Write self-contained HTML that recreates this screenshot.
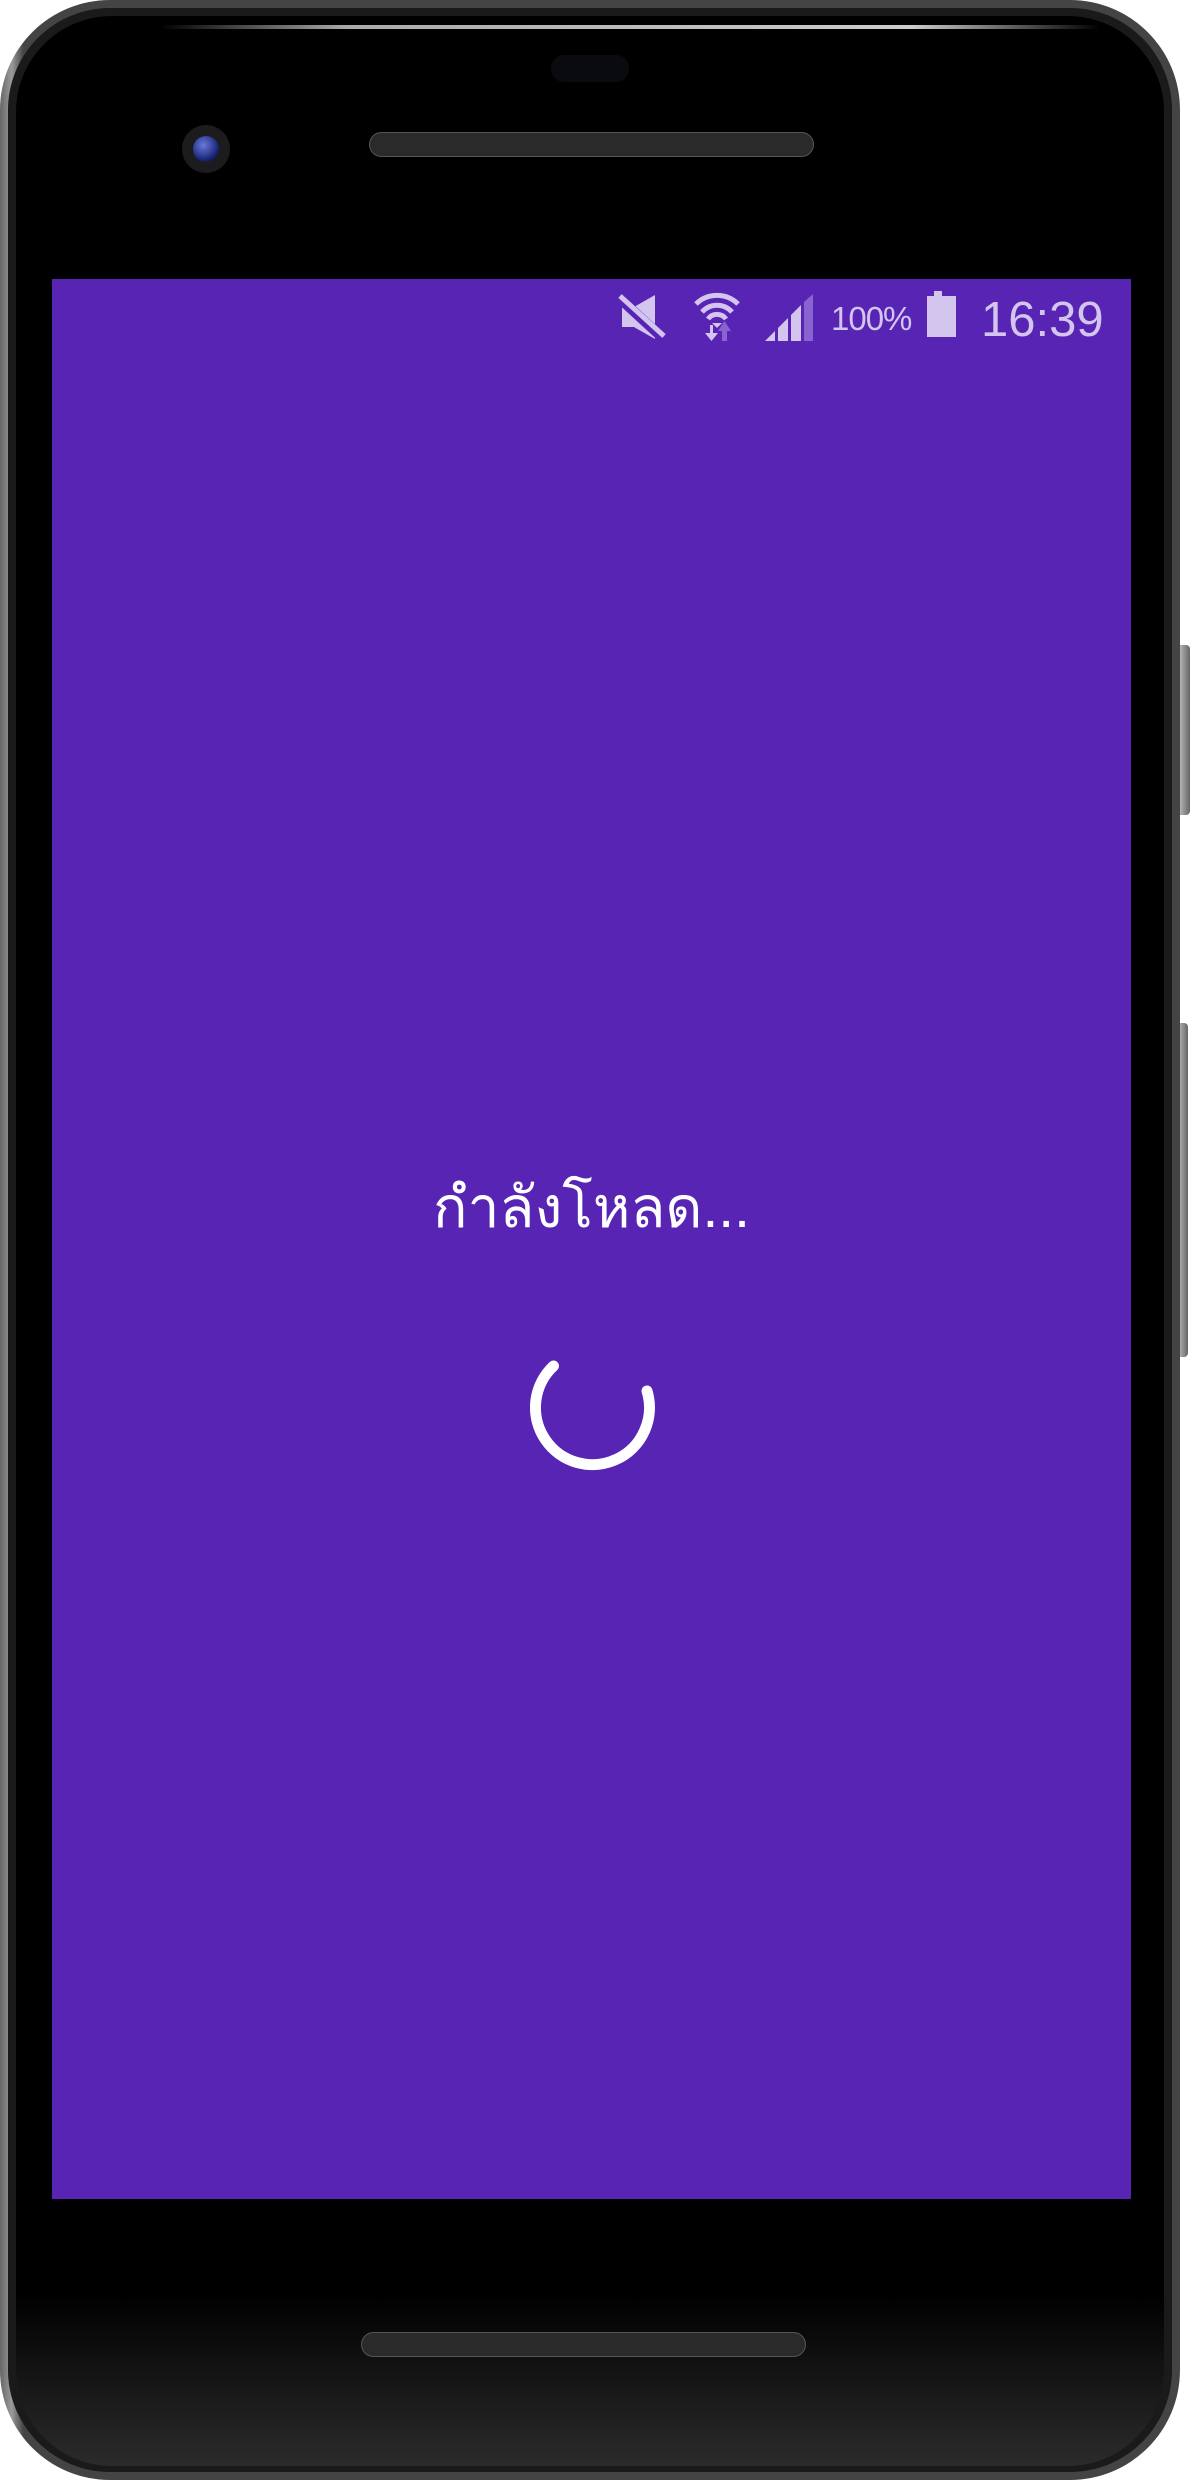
<!DOCTYPE html>
<html><head><meta charset="utf-8"><style>
html,body{margin:0;padding:0;background:#fff;}
body{width:1194px;height:2480px;position:relative;overflow:hidden;font-family:"Liberation Sans",sans-serif;}
.abs{position:absolute;}
</style></head><body>
<div class="abs" style="left:1168px;top:645px;width:22px;height:170px;background:linear-gradient(90deg,#555,#bbb,#666);border-radius:4px;"></div>
<div class="abs" style="left:1168px;top:1023px;width:20px;height:334px;background:linear-gradient(90deg,#555,#bbb,#666);border-radius:4px;"></div>
<div class="abs" style="left:0;top:0;width:1180px;height:2480px;border-radius:110px;background:linear-gradient(90deg,#666,#9a9a9a 1%,#444 2%);"></div>
<div class="abs" style="left:8px;top:8px;width:1164px;height:2464px;border-radius:102px;background:#1a1a1a;"></div>
<div class="abs" style="left:16px;top:16px;width:1148px;height:2450px;border-radius:96px;background:linear-gradient(180deg,#000 0%,#000 93%,#2b2b2b 100%);"></div>
<div class="abs" style="left:160px;top:25px;width:940px;height:4px;background:linear-gradient(90deg,transparent,#aaa 20%,#ccc 80%,transparent);border-radius:2px;"></div>
<div class="abs" style="left:551px;top:55px;width:78px;height:27px;border-radius:13px;background:#0a0b0e;"></div>
<div class="abs" style="left:182px;top:125px;width:48px;height:48px;border-radius:50%;background:#1c1c1e;"></div>
<div class="abs" style="left:193px;top:136px;width:26px;height:26px;border-radius:50%;background:radial-gradient(circle at 40% 35%,#6a7ad8,#1d2a80 60%,#000);"></div>
<div class="abs" style="left:369px;top:132px;width:445px;height:25px;border-radius:13px;background:#2a2a2a;border:1px solid #555;box-sizing:border-box;"></div>
<div class="abs" style="left:361px;top:2332px;width:445px;height:25px;border-radius:13px;background:#2a2a2a;border:1px solid #555;box-sizing:border-box;"></div>
<div class="abs" style="left:52px;top:279px;width:1079px;height:1920px;background:#5724b4;"></div>
<svg class="abs" style="left:600px;top:283px" width="240" height="70" viewBox="0 0 240 70">
 <g fill="#d3c5ee">
  <rect x="22" y="24" width="12" height="20"/>
  <polygon points="34,24 55,12 55,56 34,44"/>
 </g>
 <line x1="18" y1="14" x2="66" y2="58" stroke="#5724b4" stroke-width="10"/>
 <line x1="20" y1="13" x2="64" y2="53" stroke="#d3c5ee" stroke-width="5"/>
 <g fill="none" stroke="#d3c5ee" stroke-width="5">
  <path d="M96,21 A30,30 0 0 1 138,21"/>
  <path d="M102,29 A20,20 0 0 1 132,29"/>
  <path d="M108,36 A11,11 0 0 1 126,36"/>
 </g>
 <polygon points="112,40 122,40 117,45" fill="#d3c5ee"/>
 <rect x="110" y="42" width="3" height="12" fill="#d3c5ee"/>
 <polygon points="105,50 118,50 111.5,58" fill="#d3c5ee"/>
 <rect x="122" y="46" width="5" height="12" fill="#8a63d0"/>
 <polygon points="118,48 131,48 124.5,38" fill="#8a63d0"/>
 <polygon points="165,58 175,48 175,58" fill="#d3c5ee"/>
 <polygon points="178,45 188,35 188,58 178,58" fill="#d3c5ee"/>
 <polygon points="191,32 201,22 201,58 191,58" fill="#d3c5ee"/>
 <polygon points="204,19 213,11 213,58 204,58" fill="#8a63d0"/>
</svg>
<div class="abs" style="left:831px;top:297px;font-size:33px;color:#d3c5ee;line-height:44px;letter-spacing:-1px;">100%</div>
<div class="abs" style="left:934px;top:291px;width:8px;height:5px;background:#d3c5ee;"></div>
<div class="abs" style="left:927px;top:296px;width:29px;height:41px;background:#d3c5ee;"></div>
<div class="abs" style="left:981px;top:290px;font-size:49px;color:#d3c5ee;line-height:60px;">16:39</div>
<div class="abs" style="left:52px;width:1079px;top:1168px;text-align:center;font-family:'Liberation Sans','Noto Sans CJK SC',sans-serif;font-size:57px;color:#fff;line-height:80px;">กำลังโหลด...</div>
<svg class="abs" style="left:522px;top:1343px" width="140" height="140" viewBox="0 0 140 140">
 <path d="M31.5,23 A57,57 0 1 0 125,48" fill="none" stroke="#fff" stroke-width="11" stroke-linecap="round"/>
</svg>
</body></html>
